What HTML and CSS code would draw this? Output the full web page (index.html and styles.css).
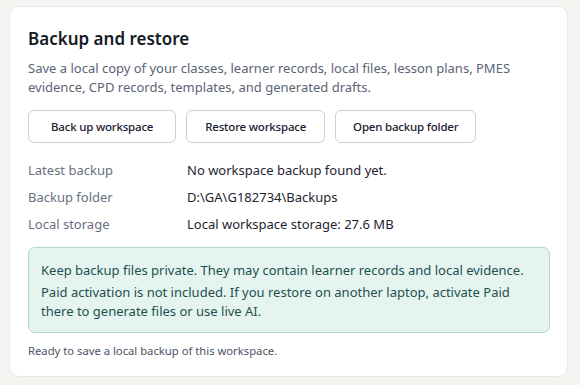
FILE: index.html
```html
<html>
  <head>
    <title>Backup and restore</title>
    <link rel="stylesheet" href="styles.css">
  </head>

  <body>
    <div class="card">
      <h2 class="title">Backup and restore</h2>
      <p class="intro">
        Save a local copy of your classes, learner records, local files, lesson plans, PMES
        evidence, CPD records, templates, and generated drafts.
      </p>

      <div class="buttons">
        <button id="backup">Back up workspace</button>
        <button id="restore">Restore workspace</button>
        <button id="open-folder">Open backup folder</button>
      </div>

      <div class="details">
        <div class="label">Latest backup</div>
        <div class="value">No workspace backup found yet.</div>
        <div class="label">Backup folder</div>
        <div class="value">D:\GA\G182734\Backups</div>
        <div class="label">Local storage</div>
        <div class="value">Local workspace storage: 27.6 MB</div>
      </div>

      <div class="notice">
        <p>Keep backup files private. They may contain learner records and local evidence.</p>
        <p>Paid activation is not included. If you restore on another laptop, activate Paid
          there to generate files or use live AI.</p>
      </div>

      <p class="status">Ready to save a local backup of this workspace.</p>
    </div>
  </body>
</html>
```

FILE: styles.css
```css
body {
  margin: 0;
  padding: 6px 12px 8px 9px;
  background: #f4f5f1;
  font-family: "Noto Sans", sans-serif;
  color: #1f2430;
}

.card {
  background: #fff;
  border: 1px solid #e6e9ee;
  border-radius: 10px;
  padding: 20px 18px 18px 18px;
  height: 371px;
  box-sizing: border-box;
}

h2.title {
  margin: 0;
  font-size: 17px;
  line-height: 24px;
  font-weight: 600;
  color: #141a26;
}

.intro {
  margin: 8px 0 0;
  font-size: 13px;
  line-height: 19px;
  color: #5b6475;
}

.buttons {
  display: flex;
  gap: 10px;
  margin-top: 13px;
}

.buttons button {
  flex: none;
  height: 33px;
  padding: 0 20px;
  background: #fff;
  border: 1px solid #c7cedb;
  border-radius: 6px;
  font-family: "Noto Sans", sans-serif;
  font-size: 11.5px;
  font-weight: 500;
  letter-spacing: -0.2px;
  white-space: nowrap;
  color: #1a2030;
}

#backup {
  padding: 0 22px;
}

#restore {
  padding: 0 18px;
}

#open-folder {
  padding: 0 17px;
}

.details {
  display: grid;
  grid-template-columns: 159px 1fr;
  row-gap: 8px;
  margin-top: 17.5px;
  font-size: 13px;
  line-height: 19px;
}

.label {
  color: #687080;
}

.value {
  color: #1f2430;
}

.notice {
  margin-top: 13.5px;
  background: #e6f4f0;
  border: 1px solid #a9d9cd;
  border-radius: 7px;
  padding: 12.5px 12px 11.5px;
  font-size: 13px;
  line-height: 19px;
  color: #21504f;
  width: 522px;
  box-sizing: border-box;
}

.notice p {
  margin: 0 0 3px;
}

.notice p:last-child {
  margin-bottom: 0;
}

.status {
  margin: 10px 0 0;
  font-size: 11.25px;
  line-height: 16px;
  color: #4b5365;
}
```
